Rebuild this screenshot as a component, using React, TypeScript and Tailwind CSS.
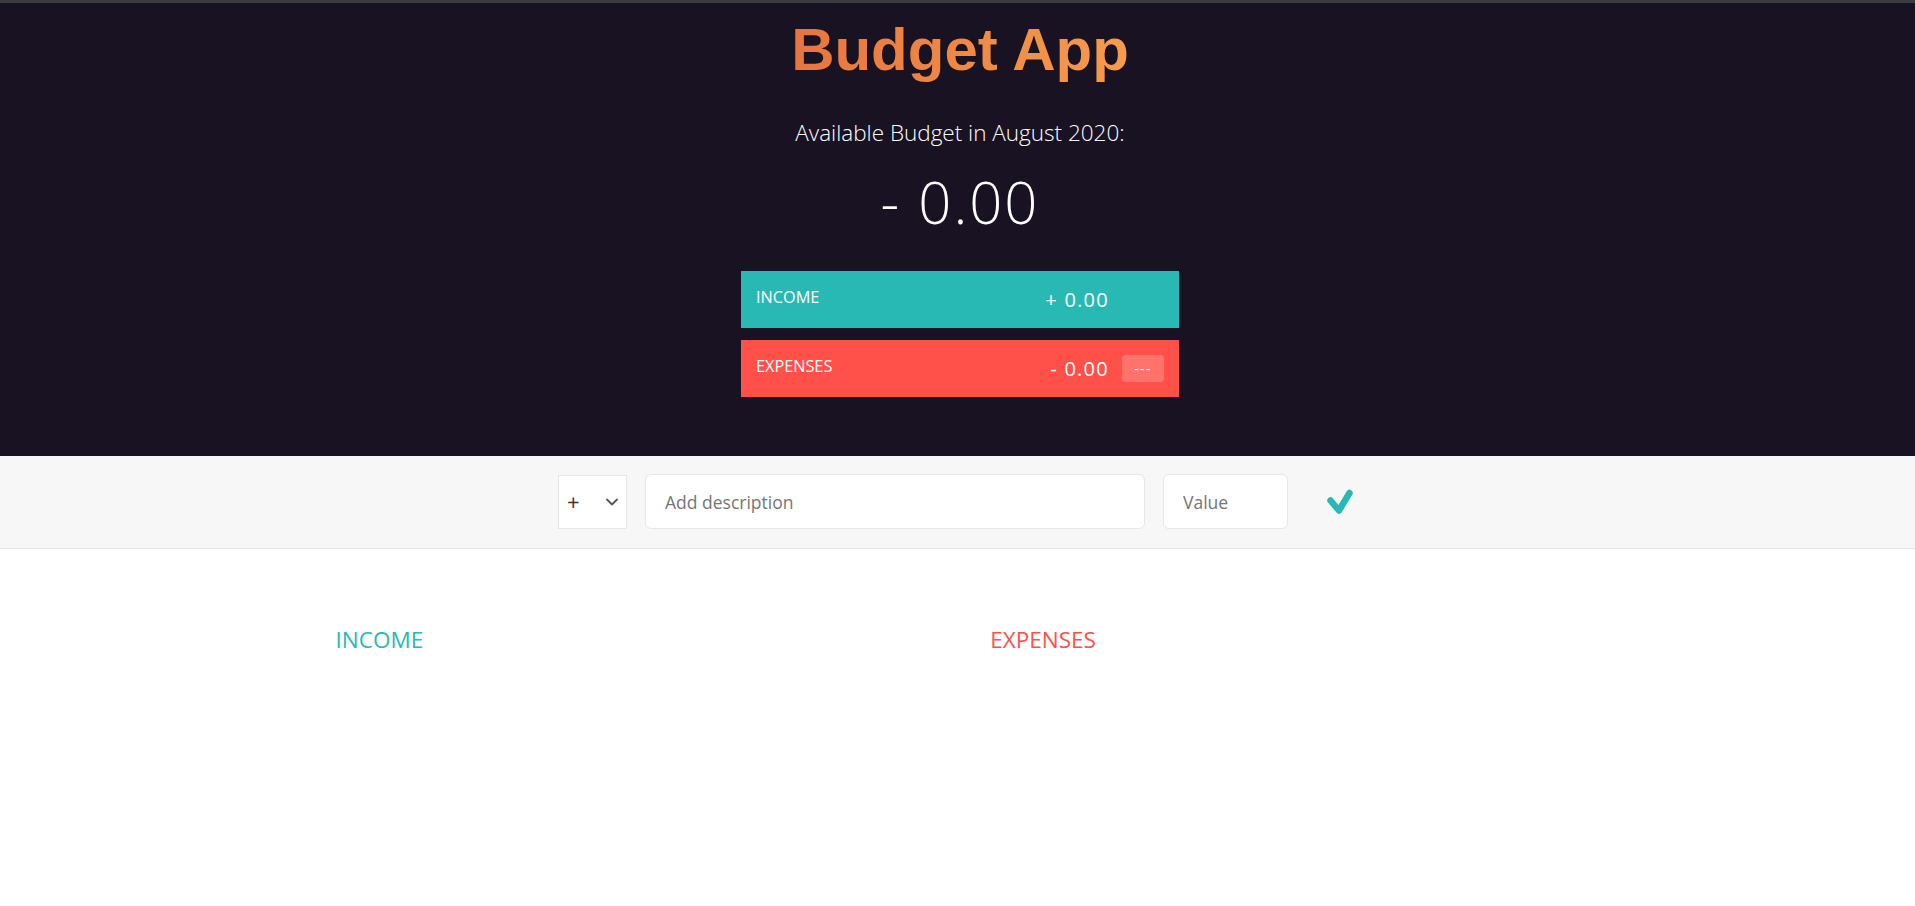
import { ChevronDown } from "lucide-react";

const sans = "font-['Open_Sans','Liberation_Sans',sans-serif]";

function CheckIcon() {
    return (
        <svg width="26" height="26" viewBox="0 0 26 26" fill="none" className="block">
            <polyline
                points="3.5,11.5 12,21.5 22.5,4"
                stroke="#28B9B5"
                strokeWidth="6.5"
                strokeLinecap="round"
                strokeLinejoin="round"
            />
        </svg>
    );
}

type BudgetRowProps = {
    label: string;
    value: string;
    percentage?: string;
    tone: "income" | "expenses";
};

function BudgetRow({ label, value, percentage, tone }: BudgetRowProps) {
    return (
        <div
            className={`flex items-start justify-between p-[15px] uppercase text-white ${
                tone === "income" ? "bg-[#28B9B5]" : "bg-[#FF5049]"
            }`}
        >
            <div className="text-[16.25px] leading-[22px]">{label}</div>
            <div className="flex items-start">
                <div className="text-[20px] leading-[27px] tracking-[1.25px]">{value}</div>
                <div
                    className={`ml-[12.5px] w-[42.5px] py-[3.75px] text-center text-[15px] leading-[19px] tracking-[1px] rounded-[4px] ${
                        percentage ? "bg-white/20" : ""
                    }`}
                >
                    {percentage ?? ""}
                </div>
            </div>
        </div>
    );
}

export default function App() {
    return (
        <div className={`${sans} min-h-[906px] bg-white text-[#555]`}>
            {/* window strip */}
            <div className="h-[3px] bg-[#3b3b3d]" />

            {/* Top: budget summary */}
            <div className="h-[453px] bg-[#181222] pl-[5px] pt-[16px]">
                <div className="mx-auto flex w-[438px] flex-col">
                    <h1 className="text-center font-['Liberation_Sans',Arial,sans-serif] text-[60px] font-bold leading-[61px]">
                        <span className="bg-gradient-to-r from-[#e8743d] to-[#f59c4c] bg-clip-text text-transparent">
                            Budget App
                        </span>
                    </h1>
                    <div className="mt-[38px] text-center text-[22.5px] font-light leading-[30px] text-white">
                        Available Budget in August 2020:
                    </div>
                    <div className="mt-[24px] text-center text-[58px] font-light leading-[60px] tracking-[2px] text-white">
                        - 0.00
                    </div>
                    <div className="mt-[39px] flex flex-col gap-[12px]">
                        <BudgetRow label="Income" value="+ 0.00" tone="income" />
                        <BudgetRow label="Expenses" value="- 0.00" percentage="---" tone="expenses" />
                    </div>
                </div>
            </div>

            {/* Add item bar */}
            <div className="border-b-[1.25px] border-[#e7e7e7] bg-[#f7f7f7] pb-[19px] pt-[18px]">
                <div className="flex items-center justify-center">
                    <div className="mr-[18px] flex h-[54px] w-[69px] items-center justify-between border border-[#e7e7e7] bg-white pl-[8px] pr-[4px]">
                        <span className="text-[22px] text-[#333]">+</span>
                        <ChevronDown className="h-[20px] w-[20px] text-[#555]" strokeWidth={2.2} />
                    </div>
                    <input
                        type="text"
                        placeholder="Add description"
                        className="mr-[18px] h-[55px] w-[500px] rounded-[6px] border border-[#e7e7e7] bg-white px-[19px] text-[17.5px] outline-none placeholder:text-[#757575]"
                    />
                    <input
                        type="number"
                        placeholder="Value"
                        className="h-[55px] w-[125px] rounded-[6px] border border-[#e7e7e7] bg-white px-[19px] text-[17.5px] outline-none placeholder:text-[#757575]"
                    />
                    <button className="ml-[39px] mr-[4px] flex h-[26px] w-[26px] items-center">
                        <CheckIcon />
                    </button>
                </div>
            </div>

            {/* Lists */}
            <div className="mx-auto mt-[76px] flex w-[1250px] pl-[3px]">
                <div className="mr-[62.5px] w-[594px]">
                    <h2 className="text-[22.5px] uppercase leading-[30px] text-[#28B9B5]">Income</h2>
                </div>
                <div className="w-[594px]">
                    <h2 className="text-[22.5px] uppercase leading-[30px] text-[#FF5049]">Expenses</h2>
                </div>
            </div>
        </div>
    );
}
